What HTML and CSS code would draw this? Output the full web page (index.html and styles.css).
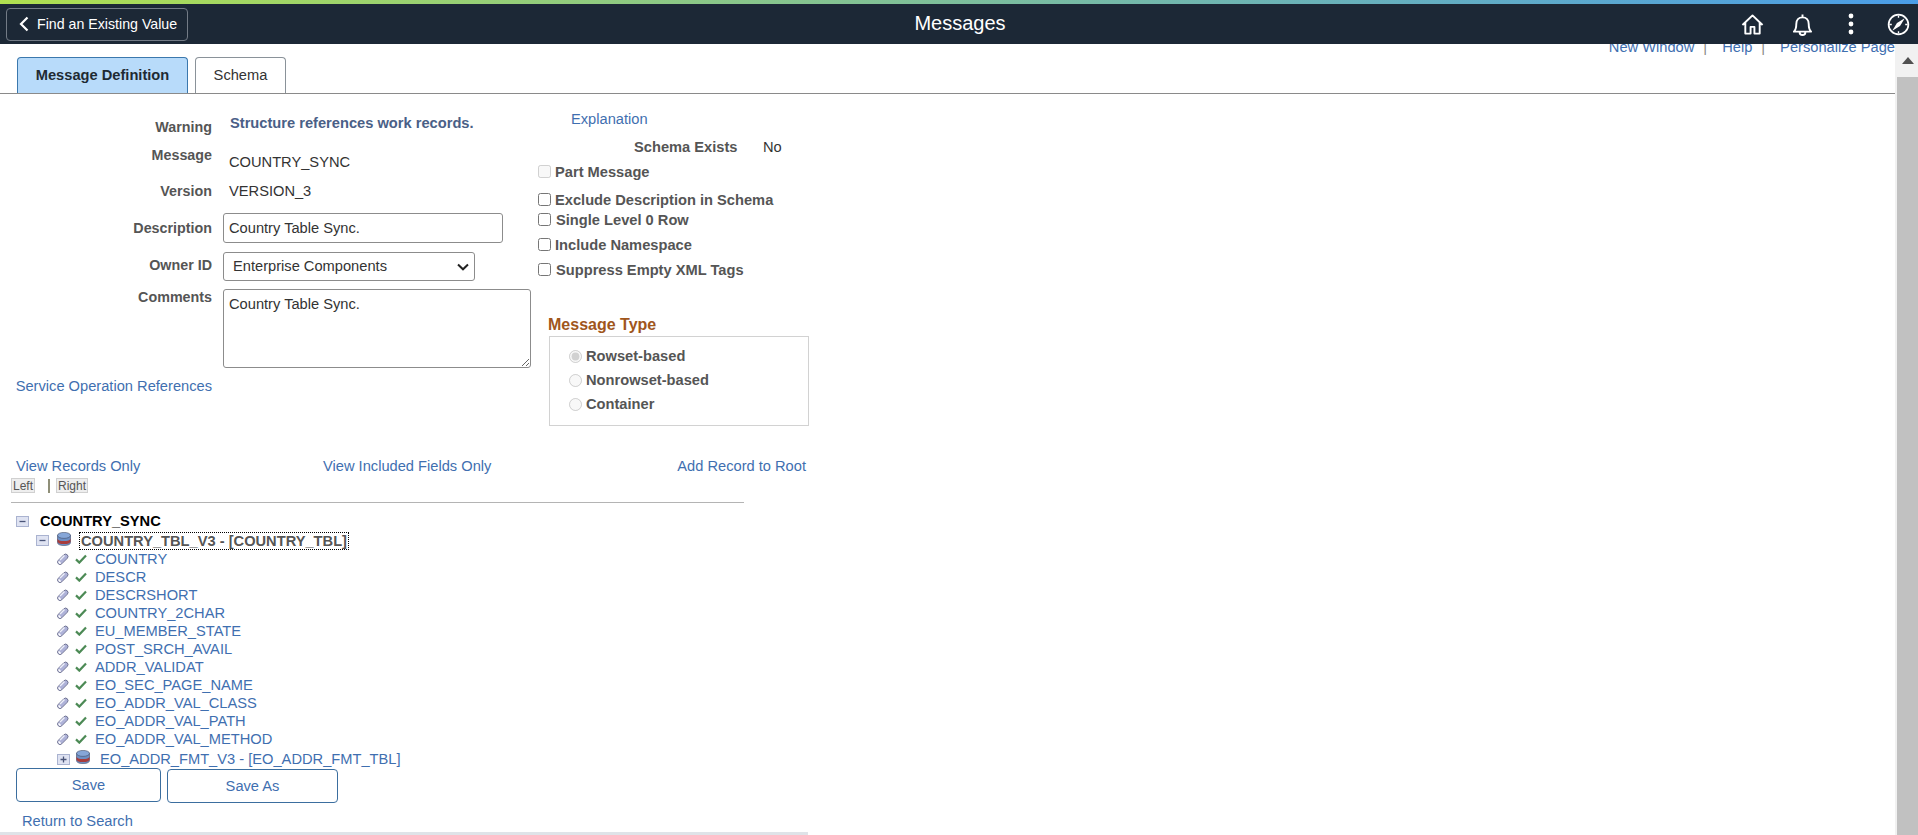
FILE: index.html
```html
<!DOCTYPE html>
<html lang="en">
<head>
<meta charset="utf-8">
<title>Messages</title>
<link rel="stylesheet" href="styles.css">
</head>
<body>
<svg class="defs" aria-hidden="true">
  <defs>
    <symbol id="pencil" viewBox="0 0 12 12">
      <path d="M1.300 7.300 6.800 1.800a2.600 2.600 0 0 1 3.500 0 2.600 2.600 0 0 1 0 3.500L4.800 10.800a2.500 2.500 0 0 1-3.500 0 2.500 2.500 0 0 1 0-3.500Z" fill="#aeb2d8" stroke="#5c6080" stroke-width=".8"/>
      <path d="M1.800 7.800 4.300 10.300a2 2 0 0 1-2.500 0 2 2 0 0 1 0-2.500Z" fill="#fff"/>
      <path d="M3 7 7.500 2.600" stroke="#eef0fa" stroke-width="1.400"/>
    </symbol>
    <symbol id="check" viewBox="0 0 12 10">
      <path d="M1 5.400 4.300 8.600 11 1.600" fill="none" stroke="#4c8a55" stroke-width="2.200"/>
    </symbol>
    <symbol id="db" viewBox="0 0 14 14">
      <path d="M.5 3.200v7.400C.5 12.400 3.400 13.600 7 13.600s6.500-1.200 6.500-3V3.200Z" fill="#6c8fc4" stroke="#3f4a66" stroke-width=".6"/>
      <path d="M.5 6.400v3C.5 11 3.400 12 7 12s6.500-1 6.500-2.600v-3C13.500 8 10.600 9 7 9S.5 8 .5 6.400Z" fill="#a83c3c"/>
      <ellipse cx="7" cy="3.400" rx="6.500" ry="3" fill="#86a6d8" stroke="#3f4a66" stroke-width=".6"/>
    </symbol>
    <symbol id="minus" viewBox="0 0 13 11">
      <rect x=".5" y=".5" width="12" height="10" fill="#dfe3f2" stroke="#aab3d0"/>
      <path d="M3.500 5.500h6" stroke="#4a5578" stroke-width="1.300"/>
    </symbol>
    <symbol id="plus" viewBox="0 0 13 11">
      <rect x=".5" y=".5" width="12" height="10" fill="#dfe3f2" stroke="#aab3d0"/>
      <path d="M3.500 5.500h6M6.500 2.500v6" stroke="#4a5578" stroke-width="1.300"/>
    </symbol>
  </defs>
</svg>

<header class="topbar">
  <div class="accent"></div>
  <div class="bar">
    <button class="back" type="button">
      <svg class="back-ico" viewBox="0 0 10 16"><path d="M8.500 1.500 2 8l6.500 6.500" fill="none" stroke="#fff" stroke-width="2.200"/></svg>
      Find an Existing Value
    </button>
    <div class="title">Messages</div>
    <div class="actions">
      <svg class="ico ico-home" viewBox="0 0 24 24"><path d="M1.500 12.500 12 2.500l10.500 10M4.500 10v11.500h5.500v-7h4v7h5.500V10" fill="none" stroke="#fff" stroke-width="2" stroke-linejoin="round"/></svg>
      <svg class="ico ico-bell" viewBox="0 0 22 24"><path d="M2 19.500c2-2 2.500-4 2.500-8 0-4 2.500-7 6.500-7s6.500 3 6.500 7c0 4 .5 6 2.500 8ZM11 4.500V1.500M8 20c0 4 6 4 6 0" fill="none" stroke="#fff" stroke-width="2" stroke-linejoin="round"/></svg>
      <svg class="ico ico-dots" viewBox="0 0 6 22"><circle cx="3" cy="3" r="2.400" fill="#fff"/><circle cx="3" cy="11" r="2.400" fill="#fff"/><circle cx="3" cy="19" r="2.400" fill="#fff"/></svg>
      <svg class="ico ico-nav" viewBox="0 0 24 24"><circle cx="12" cy="12" r="10.300" fill="none" stroke="#fff" stroke-width="1.800"/><path d="M12 2.500v2.500M12 19v2.500M2.500 12H5M19 12h2.500" stroke="#fff" stroke-width="1.400"/><path d="M18.500 5.500 13.600 13.600 5.500 18.500 10.400 10.400Z" fill="#fff"/></svg>
    </div>
  </div>
</header>

<div class="viewport">
  <main class="page">
    <div class="toplinks">
      <a class="link" href="#">New Window</a><span class="pipe">|</span>
      <a class="link" href="#">Help</a><span class="pipe">|</span>
      <a class="link" href="#">Personalize Page</a>
    </div>

    <nav class="tabs">
      <a class="tab tab-active" href="#">Message Definition</a>
      <a class="tab tab-plain" href="#">Schema</a>
    </nav>

    <section class="form-top">
      <div class="col-left">
        <div class="row row-warning">
          <div class="lbl">Warning</div>
          <div class="warn-text">Structure references work records.</div>
        </div>
        <div class="row row-message">
          <div class="lbl">Message</div>
          <div class="val">COUNTRY_SYNC</div>
        </div>
        <div class="row row-version">
          <div class="lbl">Version</div>
          <div class="val">VERSION_3</div>
        </div>
        <div class="row row-desc">
          <label class="lbl" for="desc">Description</label>
          <div><input class="field field-desc" id="desc" type="text" value="Country Table Sync."></div>
        </div>
        <div class="row row-owner">
          <label class="lbl" for="owner">Owner ID</label>
          <div><select class="field field-owner" id="owner"><option>Enterprise Components</option></select></div>
        </div>
        <div class="row row-comments">
          <label class="lbl" for="comm">Comments</label>
          <div><textarea class="field field-comments" id="comm">Country Table Sync.</textarea></div>
        </div>
        <div class="service"><a class="link" href="#">Service Operation References</a></div>
      </div>

      <div class="col-right">
        <a class="link explain" href="#">Explanation</a>
        <div class="schema"><span class="schema-lbl">Schema Exists</span><span class="schema-val">No</span></div>
        <label class="chk chk-part is-disabled"><input type="checkbox" disabled>Part Message</label>
        <label class="chk chk-exclude"><input type="checkbox">Exclude Description in Schema</label>
        <label class="chk chk-single wide"><input type="checkbox">Single Level 0 Row</label>
        <label class="chk chk-incl"><input type="checkbox">Include Namespace</label>
        <label class="chk chk-incl wide"><input type="checkbox">Suppress Empty XML Tags</label>
        <div class="group-title">Message Type</div>
        <div class="group">
          <label class="radio"><input type="radio" name="mt" checked disabled>Rowset-based</label>
          <label class="radio"><input type="radio" name="mt" disabled>Nonrowset-based</label>
          <label class="radio"><input type="radio" name="mt" disabled>Container</label>
        </div>
      </div>
    </section>

    <div class="view-links">
      <a class="link" href="#">View Records Only</a>
      <a class="link" href="#">View Included Fields Only</a>
      <a class="link" href="#">Add Record to Root</a>
    </div>

    <div class="leftright">
      <span class="lr-btn lr-left">Left</span>
      <span class="lr-sep"></span>
      <span class="lr-btn">Right</span>
    </div>
    <div class="tree-rule"></div>

    <div class="tree">
      <div class="t-root"><svg class="box"><use href="#minus"/></svg><span>COUNTRY_SYNC</span></div>
      <div class="t-rec"><svg class="box"><use href="#minus"/></svg><svg class="dbi"><use href="#db"/></svg><span class="t-rec-name">COUNTRY_TBL_V3 - [COUNTRY_TBL]</span></div>
      <div class="t-field"><svg class="pen"><use href="#pencil"/></svg><svg class="chk-ico"><use href="#check"/></svg><a class="link" href="#">COUNTRY</a></div>
      <div class="t-field"><svg class="pen"><use href="#pencil"/></svg><svg class="chk-ico"><use href="#check"/></svg><a class="link" href="#">DESCR</a></div>
      <div class="t-field"><svg class="pen"><use href="#pencil"/></svg><svg class="chk-ico"><use href="#check"/></svg><a class="link" href="#">DESCRSHORT</a></div>
      <div class="t-field"><svg class="pen"><use href="#pencil"/></svg><svg class="chk-ico"><use href="#check"/></svg><a class="link" href="#">COUNTRY_2CHAR</a></div>
      <div class="t-field"><svg class="pen"><use href="#pencil"/></svg><svg class="chk-ico"><use href="#check"/></svg><a class="link" href="#">EU_MEMBER_STATE</a></div>
      <div class="t-field"><svg class="pen"><use href="#pencil"/></svg><svg class="chk-ico"><use href="#check"/></svg><a class="link" href="#">POST_SRCH_AVAIL</a></div>
      <div class="t-field"><svg class="pen"><use href="#pencil"/></svg><svg class="chk-ico"><use href="#check"/></svg><a class="link" href="#">ADDR_VALIDAT</a></div>
      <div class="t-field"><svg class="pen"><use href="#pencil"/></svg><svg class="chk-ico"><use href="#check"/></svg><a class="link" href="#">EO_SEC_PAGE_NAME</a></div>
      <div class="t-field"><svg class="pen"><use href="#pencil"/></svg><svg class="chk-ico"><use href="#check"/></svg><a class="link" href="#">EO_ADDR_VAL_CLASS</a></div>
      <div class="t-field"><svg class="pen"><use href="#pencil"/></svg><svg class="chk-ico"><use href="#check"/></svg><a class="link" href="#">EO_ADDR_VAL_PATH</a></div>
      <div class="t-field"><svg class="pen"><use href="#pencil"/></svg><svg class="chk-ico"><use href="#check"/></svg><a class="link" href="#">EO_ADDR_VAL_METHOD</a></div>
      <div class="t-child"><svg class="box"><use href="#plus"/></svg><svg class="dbi"><use href="#db"/></svg><a class="link" href="#">EO_ADDR_FMT_V3 - [EO_ADDR_FMT_TBL]</a></div>
    </div>

    <div class="buttons">
      <button class="btn btn-save" type="button">Save</button>
      <button class="btn btn-saveas" type="button">Save As</button>
    </div>
    <div class="return"><a class="link" href="#">Return to Search</a></div>
    <div class="hscroll"></div>
  </main>
  <aside class="vscroll">
    <div class="vs-up"><svg class="vs-arrow" viewBox="0 0 12 7"><path d="M6 0 12 7H0Z" fill="#505050"/></svg></div>
    <div class="vs-thumb"></div>
  </aside>
</div>
</body>
</html>
```
FILE: styles.css
```css
* { box-sizing: border-box; }
html, body { margin: 0; height: 835px; overflow: hidden; background: #fff; }
body { font: 14.67px/16px "Liberation Sans", Arial, sans-serif; color: #333; }
.defs { position: absolute; width: 0; height: 0; }
a { text-decoration: none; }
.link { color: #3f6fb0; }

.topbar { height: 44px; }
.accent { height: 4px; background: linear-gradient(90deg, #b0e050 0%, #4a9de8 100%); }
.bar { height: 40px; background: #1c2836; display: grid; grid-template-columns: 1fr auto 1fr; align-items: center; }
.back { justify-self: start; margin: 0 0 0 6px; width: 182px; height: 33px; padding: 0 0 0 12px; display: flex; align-items: center; gap: 8px; background: transparent; color: #fff; border: 1px solid #737b86; border-radius: 4px; font: 14.2px "Liberation Sans", Arial, sans-serif; }
.back-ico { width: 10px; height: 16px; }
.title { color: #fff; font-size: 20px; line-height: 24px; margin: 0 0 2px 2px; }
.actions { justify-self: end; display: flex; align-items: center; padding-right: 8px; }
.ico { display: block; }
.ico-home { width: 23px; height: 23px; margin-right: 28px; }
.ico-bell { width: 21px; height: 23px; margin-right: 35px; }
.ico-dots { width: 6px; height: 22px; margin-right: 33px; }
.ico-nav { width: 23px; height: 23px; }

.viewport { display: flex; height: 791px; overflow: hidden; }
.page { width: 1895px; flex: none; overflow: hidden; }

.toplinks { height: 13px; padding-bottom: 2px; overflow: hidden; display: flex; justify-content: flex-end; align-items: flex-end; white-space: nowrap; }
.pipe { color: #888; margin: 0 15px 0 9px; }

.tabs { height: 37px; display: flex; gap: 7px; padding-left: 17px; border-bottom: 1px solid #8a8a8a; }
.tab { height: 36px; padding-bottom: 2px; display: flex; align-items: center; justify-content: center; border: 1px solid #8a9299; border-bottom: 0; border-radius: 4px 4px 0 0; }
.tab-active { width: 171px; background: #b8dbfa; border-color: #3b78ad; color: #1f2a33; font-weight: bold; }
.tab-plain { width: 91px; background: #fff; color: #333; }

.form-top { height: 360px; display: flex; }
.col-left { width: 538px; flex: none; padding-top: 19px; }
.col-right { width: 280px; flex: none; }

.row { display: grid; grid-template-columns: 212px 1fr; column-gap: 11px; }
.lbl { display: block; text-align: right; font-size: 14.3px; font-weight: bold; color: #555; }
.val { padding-left: 6px; color: #333; }
.warn-text { padding: 2px 0 0 7px; font-weight: bold; color: #4a6087; }
.row-warning { height: 32px; }
.row-warning .lbl { padding-top: 6px; }
.row-message { height: 36px; }
.row-message .lbl { padding-top: 2px; }
.row-message .val { padding-top: 9px; }
.row-version { height: 26px; }
.row-version .lbl { padding-top: 2px; }
.row-version .val { padding-top: 2px; }
.row-desc { height: 40px; padding-top: 6px; }
.row-desc .lbl { padding-top: 7px; }
.row-owner { height: 38px; padding-top: 5px; }
.row-owner .lbl { padding-top: 5px; }
.row-comments { height: 90px; padding-top: 4px; }

.field { display: block; margin: 0; border: 1px solid #8c8c8c; border-radius: 3px; background: #fff; color: #333; font: 14.67px "Liberation Sans", Arial, sans-serif; }
.field-desc { width: 280px; height: 30px; padding: 0 5px; }
.field-owner { width: 252px; height: 29px; padding: 0 30px 2px 9px; appearance: none; background: #fff url("data:image/svg+xml,%3Csvg xmlns='http://www.w3.org/2000/svg' width='12' height='8' viewBox='0 0 12 8'%3E%3Cpath d='M1 1.500 6 6.300 11 1.500' fill='none' stroke='%23222' stroke-width='2'/%3E%3C/svg%3E") no-repeat right 5px center; }
.field-comments { width: 308px; height: 79px; padding: 6px 5px; line-height: 16px; }
.service { width: 212px; padding-top: 3px; text-align: right; white-space: nowrap; }

.explain { display: block; margin: 17px 0 0 33px; }
.schema { margin: 12px 0 0 96px; display: flex; font-weight: bold; color: #555; }
.schema-lbl { width: 102px; white-space: nowrap; }
.schema-val { margin-left: 27px; font-weight: normal; color: #333; }
.chk { display: flex; align-items: center; height: 16px; font-weight: bold; color: #555; white-space: nowrap; }
.chk input { margin: -2px 4px 0 0; width: 13px; height: 13px; flex: none; }
.chk.wide input { margin-right: 5px; }
.chk-part { margin-top: 9px; }
.chk-exclude { margin-top: 12px; }
.chk-single { margin-top: 4px; }
.chk-incl { margin-top: 9px; }
.group-title { margin: 38px 0 0 10px; font-size: 16px; line-height: 18px; font-weight: bold; color: #a0561c; }
.group { width: 260px; height: 90px; margin: 2px 0 0 11px; padding: 7px 0 0 19px; border: 1px solid #d2d2d2; }
.radio { display: flex; align-items: center; height: 24px; font-weight: bold; color: #555; }
.radio input { margin: 0 4px 0 0; width: 13px; height: 13px; }

.view-links { margin: 4px 0 0 16px; width: 790px; display: grid; grid-template-columns: 307px 1fr auto; }
.leftright { margin: 4px 0 0 11px; height: 15px; display: flex; align-items: center; }
.lr-btn { height: 15px; padding: 0 1px; font-size: 12px; line-height: 14px; color: #555; background: #eee; border: 1px solid #d0d0d0; }
.lr-sep { width: 2px; height: 14px; margin: 0 6px 0 13px; background: #8f8f78; }
.tree-rule { margin: 9px 0 0 11px; width: 733px; height: 1px; background: #b4b4b4; }

.tree { margin-top: 9px; white-space: nowrap; }
.t-root { height: 18px; display: flex; align-items: center; padding-left: 16px; font-weight: bold; color: #000; }
.t-root .box { margin-right: 11px; }
.t-rec { height: 19px; margin-top: 1px; display: flex; align-items: center; padding-left: 36px; }
.t-rec-name { margin-left: 9px; padding: 0 1px; font-weight: bold; color: #555; outline: 1px dotted #000; line-height: 16px; }
.t-field { height: 18px; display: flex; align-items: center; padding-left: 57px; }
.t-child { height: 18px; margin-top: 2px; display: flex; align-items: center; padding-left: 57px; }
.t-child .dbi { margin: -4px 10px 0 6px; }
.t-rec .dbi { margin: -4px 0 0 8px; }
svg.box { width: 13px; height: 11px; flex: none; }
svg.dbi { width: 14px; height: 14px; flex: none; }
svg.pen { width: 12px; height: 12px; flex: none; margin-right: 6px; }
svg.chk-ico { width: 12px; height: 10px; flex: none; margin-right: 8px; }

.buttons { display: flex; gap: 6px; padding-left: 16px; align-items: flex-start; height: 35px; }
.btn { margin: 0; background: #fff; color: #3f6fb0; border: 1px solid #3b6e9f; border-radius: 4px; font: 14.67px "Liberation Sans", Arial, sans-serif; height: 34px; padding: 0; }
.btn-save { width: 145px; }
.btn-saveas { width: 171px; margin-top: 1px; }
.return { margin-top: 10px; padding-left: 22px; height: 19px; }
.hscroll { width: 808px; height: 3px; background: #dfe3e8; }

.vscroll { width: 23px; flex: none; background: #f1f1f1; padding-left: 2px; }
.vs-up { height: 33px; display: flex; align-items: center; justify-content: center; }
.vs-arrow { width: 12px; height: 7px; }
.vs-thumb { height: 758px; background: #c1c1c1; }
```
